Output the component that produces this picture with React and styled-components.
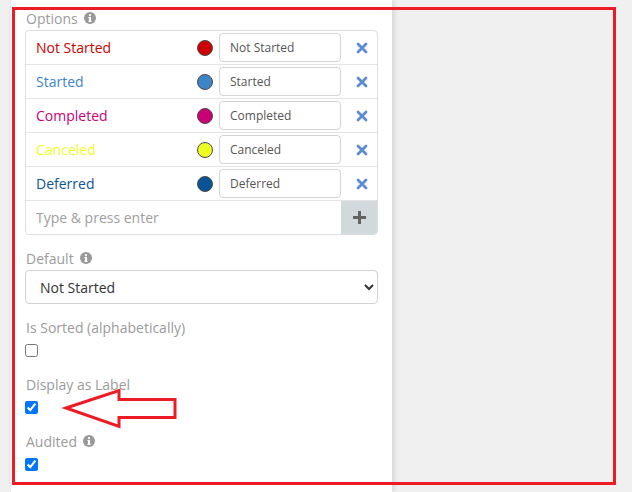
import React from 'react';
import styled, { createGlobalStyle } from 'styled-components';

const GlobalStyle = createGlobalStyle`
	html, body {
		margin: 0;
		padding: 0;
		background: #f0f0f0;
		font-family: 'Open Sans', 'Liberation Sans', sans-serif;
	}
	* {
		box-sizing: border-box;
	}
`;

const Page = styled.div`
	position: relative;
	height: 492px;
	overflow: hidden;
`;
const Panel = styled.div`
	width: 381px;
	height: 100%;
	margin-left: 11px;
	padding: 8px 14px 0 14px;
	background: #ffffff;
	box-shadow: 2px 0 6px rgba(0, 0, 0, 0.12);
`;
const Group = styled.div`
	margin-bottom: 13px;
`;
const Label = styled.div`
	display: flex;
	align-items: center;
	gap: 6px;
	height: 20px;
	margin-bottom: 2px;
	padding-left: 1px;
	font-size: 14px;
	color: #9b9b9b;
`;
const OptionList = styled.div`
	border: 1px solid #dedede;
	border-radius: 4px;
	overflow: hidden;
`;
const OptionRow = styled.div`
	display: flex;
	align-items: center;
	height: 34px;
	padding-left: 10px;
	border-bottom: 1px solid #e4e4e4;
`;
const OptionName = styled.div`
	flex: 1;
	font-size: 14px;
	color: ${(p) => p.color};
`;
const Swatch = styled.div`
	width: 16px;
	height: 16px;
	margin-right: 6px;
	border-radius: 50%;
	border: 1px solid #4a4a4a;
	background: ${(p) => p.color};
`;
const NameInput = styled.input`
	width: 122px;
	height: 29px;
	margin: 0;
	padding: 0 10px;
	border: 1px solid #d4d4d4;
	border-radius: 4px;
	font-family: inherit;
	font-size: 12px;
	color: #555555;
	outline: none;
`;
const DeleteButton = styled.div`
	display: flex;
	align-items: center;
	justify-content: center;
	width: 36px;
	padding-left: 5px;
	color: #5b8bd0;
`;
const AddRow = styled.div`
	display: flex;
	height: 33px;
`;
const AddInput = styled.input`
	flex: 1;
	min-width: 0;
	border: none;
	padding: 0 10px;
	font-family: inherit;
	font-size: 14px;
	outline: none;
	&::placeholder {
		color: #9e9e9e;
	}
`;
const AddButton = styled.div`
	display: flex;
	align-items: center;
	justify-content: center;
	width: 36px;
	background: #d1d9dc;
	color: #636363;
`;
const Select = styled.select`
	display: block;
	width: 100%;
	height: 34px;
	padding: 0 10px;
	border: 1px solid #d2d2d2;
	border-radius: 4px;
	background: #ffffff;
	font-family: inherit;
	font-size: 14px;
	color: #333333;
`;
const CheckRow = styled.div`
	display: flex;
	align-items: center;
	height: 22px;
`;
const Checkbox = styled.input`
	width: 13px;
	height: 13px;
	margin: 0;
`;
const Frame = styled.div`
	position: absolute;
	left: 12px;
	top: 7px;
	width: 604px;
	height: 478px;
	border: 3px solid #ed1c24;
	pointer-events: none;
`;
const Arrow = styled.svg`
	position: absolute;
	left: 0;
	top: 0;
	pointer-events: none;
`;

const options = [
	{ name: 'Not Started', color: '#cc0000' },
	{ name: 'Started', color: '#3d85c6' },
	{ name: 'Completed', color: '#c90076' },
	{ name: 'Canceled', color: '#eeff22' },
	{ name: 'Deferred', color: '#0b5394' },
];

const InfoIcon = () => (
	<svg width="12" height="12" viewBox="0 0 12 12">
		<circle cx="6" cy="6" r="6" fill="#999999" />
		<circle cx="6" cy="3.2" r="1.1" fill="#ffffff" />
		<rect x="5" y="5" width="2" height="4.6" fill="#ffffff" />
		<rect x="4.3" y="5" width="2.7" height="1" fill="#ffffff" />
		<rect x="4.3" y="8.8" width="3.4" height="1" fill="#ffffff" />
	</svg>
);

const CrossIcon = () => (
	<svg width="12" height="12" viewBox="0 0 12 12">
		<path d="M2 2 L10 10 M10 2 L2 10" stroke="currentColor" strokeWidth="2.8" strokeLinecap="round" />
	</svg>
);

const PlusIcon = () => (
	<svg width="15" height="15" viewBox="0 0 15 15">
		<path d="M7.5 1 V14 M1 7.5 H14" stroke="currentColor" strokeWidth="3" />
	</svg>
);

const App = () => (
	<Page>
		<GlobalStyle />
		<Panel>
			<Group>
				<Label>
					Options <InfoIcon />
				</Label>
				<OptionList>
					{options.map((o) => (
						<OptionRow key={o.name}>
							<OptionName color={o.color}>{o.name}</OptionName>
							<Swatch color={o.color} />
							<NameInput defaultValue={o.name} />
							<DeleteButton>
								<CrossIcon />
							</DeleteButton>
						</OptionRow>
					))}
					<AddRow>
						<AddInput placeholder="Type & press enter" />
						<AddButton>
							<PlusIcon />
						</AddButton>
					</AddRow>
				</OptionList>
			</Group>
			<Group>
				<Label>
					Default <InfoIcon />
				</Label>
				<Select defaultValue="Not Started">
					{options.map((o) => (
						<option key={o.name}>{o.name}</option>
					))}
				</Select>
			</Group>
			<Group>
				<Label>Is Sorted (alphabetically)</Label>
				<CheckRow>
					<Checkbox type="checkbox" />
				</CheckRow>
			</Group>
			<Group>
				<Label>Display as Label</Label>
				<CheckRow>
					<Checkbox type="checkbox" defaultChecked />
				</CheckRow>
			</Group>
			<Group>
				<Label>
					Audited <InfoIcon />
				</Label>
				<CheckRow>
					<Checkbox type="checkbox" defaultChecked />
				</CheckRow>
			</Group>
		</Panel>
		<Frame />
		<Arrow width="632" height="492">
			<polygon
				points="66,408 119,390.5 119,399.5 175,399.5 175,417.5 119,417.5 119,426.5"
				fill="none"
				stroke="#ed1c24"
				strokeWidth="3"
			/>
		</Arrow>
	</Page>
);

export default App;
